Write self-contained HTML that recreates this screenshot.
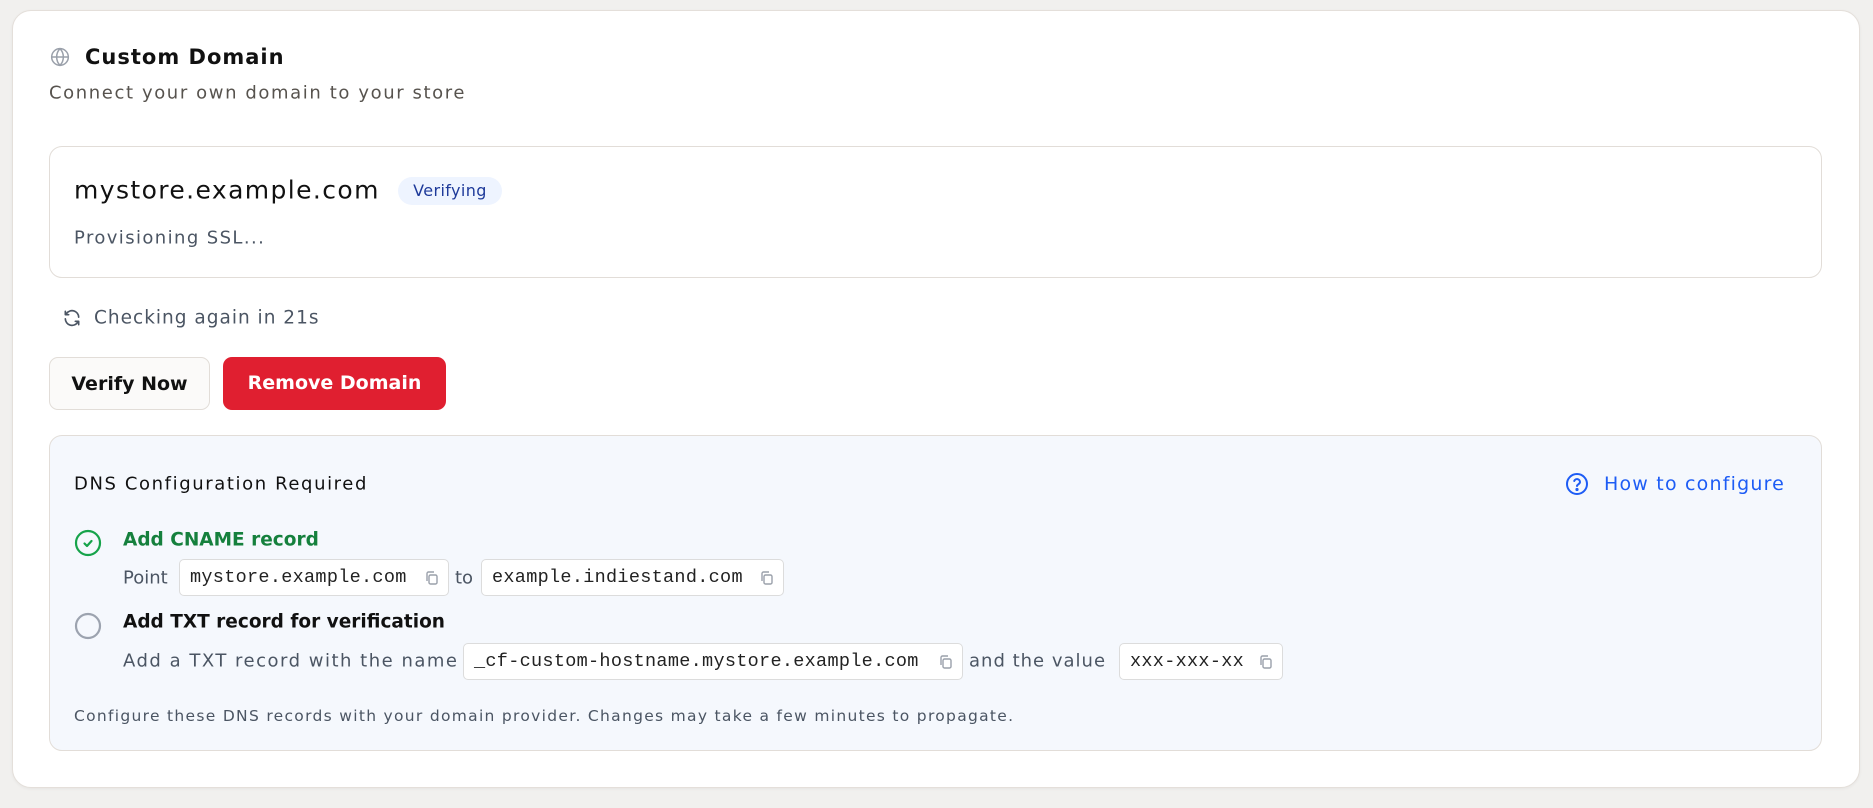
<!DOCTYPE html>
<html><head><meta charset="utf-8"><style>
*{box-sizing:border-box;margin:0;padding:0}
body{width:1873px;height:808px;background:#f1f0ee;font-family:"DejaVu Sans","Liberation Sans",sans-serif;color:#111;position:relative;overflow:hidden}
.abs{position:absolute;white-space:nowrap}
.card{position:absolute;left:12px;top:10px;width:1848px;height:778px;background:#fff;border:1px solid #e4dfda;border-radius:19px;box-shadow:0 1px 3px rgba(0,0,0,.05)}
.box{position:absolute;left:49px;width:1773px;border:1px solid #e2ddd8;border-radius:13px}
.code{position:absolute;height:37px;border:1px solid #dcdcdc;border-radius:5px;background:#fff;font-family:"Liberation Mono",monospace;font-size:18.5px;line-height:35px;padding-left:10px;color:#222;letter-spacing:.3px}
.code svg{position:absolute;right:8px;top:10px}
.btn{position:absolute;top:357px;height:53px;border-radius:9px;font-size:19px;font-weight:600;line-height:53px;text-align:center}
.vc{transform:translateY(-50%)}
</style></head><body>
<div class="card"></div>
<svg class="abs" style="left:50px;top:47px" width="20" height="20" viewBox="0 0 24 24" fill="none" stroke="#9aa0aa" stroke-width="1.8"><circle cx="12" cy="12" r="10"/><path d="M2 12h20M12 2c3 3 4 6.5 4 10s-1 7-4 10c-3-3-4-6.5-4-10s1-7 4-10z"/></svg>
<div class="abs vc" style="left:85px;top:57px;font-size:21px;font-weight:bold;letter-spacing:1px">Custom Domain</div>
<div class="abs vc" style="left:49px;top:93px;font-size:18px;color:#57534e;letter-spacing:1.6px">Connect your own domain to your store</div>

<div class="box" style="top:146px;height:132px;background:#fff"></div>
<div class="abs vc" style="left:74px;top:190px;font-size:25px;letter-spacing:1.4px">mystore.example.com</div>
<div class="abs" style="left:398px;top:177px;width:104px;height:28px;border-radius:14px;background:#eef4ff;color:#1e3a9a;font-size:16px;line-height:28px;text-align:center;letter-spacing:.4px">Verifying</div>
<div class="abs vc" style="left:74px;top:238px;font-size:18px;color:#4b5563;letter-spacing:1.4px">Provisioning SSL...</div>

<svg class="abs" style="left:62px;top:308px" width="20" height="20" viewBox="0 0 24 24" fill="none" stroke="#4b5563" stroke-width="2" stroke-linecap="round" stroke-linejoin="round"><path d="M20 11a8 8 0 0 0-14.5-4.5M4 4v4h4M4 13a8 8 0 0 0 14.5 4.5M20 20v-4h-4"/></svg>
<div class="abs vc" style="left:94px;top:318px;font-size:18.5px;color:#4b5563;letter-spacing:1px">Checking again in 21s</div>

<div class="btn" style="left:49px;width:161px;background:#fbfaf9;border:1px solid #e2ddd8">Verify Now</div>
<div class="btn" style="left:223px;width:223px;background:#e01f30;color:#fff">Remove Domain</div>

<div class="box" style="top:435px;height:316px;background:#f5f8fd"></div>
<div class="abs vc" style="left:74px;top:484px;font-size:18px;font-weight:500;letter-spacing:1.6px">DNS Configuration Required</div>
<svg class="abs" style="left:1565px;top:472px" width="24" height="24" viewBox="0 0 24 24" fill="none" stroke="#1d5cf5" stroke-width="2" stroke-linecap="round"><circle cx="12" cy="12" r="10"/><path d="M9.2 9a3 3 0 0 1 5.8 1c0 2-3 2.5-3 4"/><circle cx="12" cy="17.5" r=".6" fill="#1d5cf5"/></svg>
<div class="abs vc" style="left:1604px;top:484px;font-size:19px;color:#1d5cf5;letter-spacing:1.2px">How to configure</div>

<svg class="abs" style="left:74px;top:529px" width="28" height="28" viewBox="0 0 28 28" fill="none" stroke="#16a34a" stroke-width="2.2" stroke-linecap="round" stroke-linejoin="round"><circle cx="14" cy="14" r="12"/><path d="M10.5 14.5l2.5 2.5 4.5-5"/></svg>
<div class="abs vc" style="left:123px;top:540px;font-size:18.5px;font-weight:600;color:#15803d">Add CNAME record</div>
<div class="abs vc" style="left:123px;top:578px;font-size:18px;color:#4b5563">Point</div>
<div class="code" style="left:179px;top:559px;width:270px">mystore.example.com<svg width="16" height="16" viewBox="0 0 16 16" fill="none" stroke="#9aa0aa" stroke-width="1.4"><rect x="5" y="5" width="8" height="9" rx="1.5"/><path d="M3 11V3.5A1.5 1.5 0 0 1 4.5 2H10"/></svg></div>
<div class="abs vc" style="left:455px;top:578px;font-size:18px;color:#4b5563">to</div>
<div class="code" style="left:481px;top:559px;width:303px">example.indiestand.com<svg width="16" height="16" viewBox="0 0 16 16" fill="none" stroke="#9aa0aa" stroke-width="1.4"><rect x="5" y="5" width="8" height="9" rx="1.5"/><path d="M3 11V3.5A1.5 1.5 0 0 1 4.5 2H10"/></svg></div>

<svg class="abs" style="left:74px;top:612px" width="28" height="28" viewBox="0 0 28 28" fill="none" stroke="#9ca3af" stroke-width="2.2"><circle cx="14" cy="14" r="12"/></svg>
<div class="abs vc" style="left:123px;top:622px;font-size:18.5px;font-weight:600">Add TXT record for verification</div>
<div class="abs vc" style="left:123px;top:661px;font-size:18px;color:#4b5563;letter-spacing:1.5px">Add a TXT record with the name</div>
<div class="code" style="left:463px;top:643px;width:500px">_cf-custom-hostname.mystore.example.com<svg width="16" height="16" viewBox="0 0 16 16" fill="none" stroke="#9aa0aa" stroke-width="1.4"><rect x="5" y="5" width="8" height="9" rx="1.5"/><path d="M3 11V3.5A1.5 1.5 0 0 1 4.5 2H10"/></svg></div>
<div class="abs vc" style="left:969px;top:661px;font-size:18px;color:#4b5563;letter-spacing:1px">and the value</div>
<div class="code" style="left:1119px;top:643px;width:164px">xxx-xxx-xx<svg width="16" height="16" viewBox="0 0 16 16" fill="none" stroke="#9aa0aa" stroke-width="1.4"><rect x="5" y="5" width="8" height="9" rx="1.5"/><path d="M3 11V3.5A1.5 1.5 0 0 1 4.5 2H10"/></svg></div>

<div class="abs vc" style="left:74px;top:716px;font-size:15.5px;color:#4b5563;letter-spacing:1.3px">Configure these DNS records with your domain provider. Changes may take a few minutes to propagate.</div>
</body></html>
